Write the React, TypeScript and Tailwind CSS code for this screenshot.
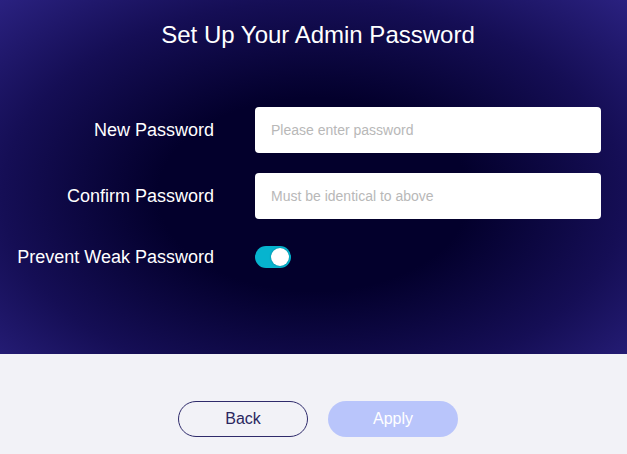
import React from "react";

export default function App() {
  return (
    <div className="w-[627px] h-[454px] flex flex-col bg-[#f2f2f7]" style={{ fontFamily: '"Liberation Sans", Arial, sans-serif' }}>
      <div className="h-[354px] flex flex-col items-center bg-[radial-gradient(ellipse_at_50%_55%,#03002c_35%,#150e55_70%,#2a2180_100%)]">
        <h1 className="mt-[21px] pl-[9px] text-[24px] leading-[28px] text-white">Set Up Your Admin Password</h1>
        <div className="mt-[58px] w-full flex flex-col">
          <div className="flex items-center h-[46px]">
            <label className="w-[214px] text-right text-[18px] text-white">New Password</label>
            <div className="ml-[41px] w-[346px] h-[46px] bg-white rounded-[4px] flex items-center px-4">
              <span className="text-[14px] text-[#b8b8b8]">Please enter password</span>
            </div>
          </div>
          <div className="flex items-center h-[46px] mt-[20px]">
            <label className="w-[214px] text-right text-[18px] text-white">Confirm Password</label>
            <div className="ml-[41px] w-[346px] h-[46px] bg-white rounded-[4px] flex items-center px-4">
              <span className="text-[14px] text-[#b8b8b8]">Must be identical to above</span>
            </div>
          </div>
          <div className="flex items-center h-[24px] mt-[26px]">
            <label className="w-[214px] text-right text-[18px] text-white">Prevent Weak Password</label>
            <div className="ml-[41px] w-[36px] h-[22px] rounded-full bg-[#06b4cf] flex items-center justify-end pr-[2px]">
              <div className="w-[18px] h-[18px] rounded-full bg-white shadow-[0_0_2px_rgba(0,0,0,0.3)]" />
            </div>
          </div>
        </div>
      </div>
      <div className="flex-1 flex justify-center gap-[20px] pt-[47px] pl-[9px]">
        <button className="w-[130px] h-[36px] rounded-full border border-[#2f2b6b] text-[#2a2660] text-[16px]">Back</button>
        <button className="w-[130px] h-[36px] rounded-full bg-[#b9c5fb] text-white text-[16px]">Apply</button>
      </div>
    </div>
  );
}
